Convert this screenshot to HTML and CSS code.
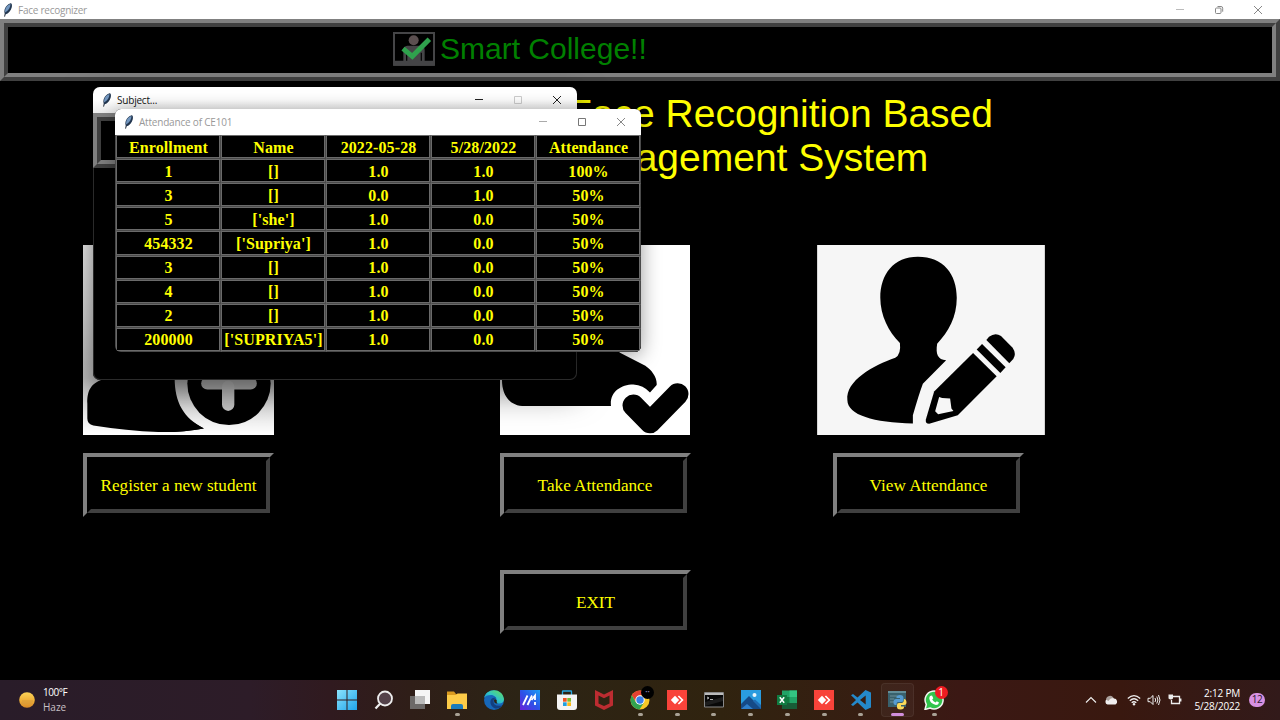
FILE: index.html
```html
<!DOCTYPE html>
<html lang="en">
<head>
<meta charset="utf-8">
<title>Face recognizer</title>
<link rel="stylesheet" href="styles.css">
</head>
<body>
<svg class="defs" aria-hidden="true">
  <defs>
    <symbol id="feather" viewBox="0 0 10 14">
      <path d="M1.600 13.600C1.900 11.600 2.300 10.200 3.100 8.700" fill="none" stroke="#222c3a" stroke-width="1"/>
      <path d="M2.200 11.500C0 7.500 2.500 2.200 7 .4C9 0 9.300 2.200 8.700 4.600C7.900 8 5.800 10.500 2.200 11.500Z" fill="#22364f"/>
      <path d="M2.200 9.500C1.500 5.500 4 2 7.500 1C7.500 4.500 5.600 7.600 2.200 9.500Z" fill="#7296bf"/>
    </symbol>
    <linearGradient id="win" x2="1" y2="1"><stop stop-color="#8be3fc"/><stop offset="1" stop-color="#1fa4ea"/></linearGradient>
    <linearGradient id="edgeA" x1="1" x2="0" y2="1"><stop stop-color="#6be04a"/><stop offset=".5" stop-color="#2fc3c9"/><stop offset="1" stop-color="#1278cf"/></linearGradient>
    <linearGradient id="my" x1="0" y1="1" x2="1" y2="0"><stop stop-color="#6a1fd8"/><stop offset=".5" stop-color="#2c52e8"/><stop offset="1" stop-color="#18a0f5"/></linearGradient>
    <linearGradient id="sun" x2="0" y2="1"><stop stop-color="#fcd458"/><stop offset=".5" stop-color="#f0b23a"/><stop offset="1" stop-color="#d88a28"/></linearGradient>
    <linearGradient id="shade" gradientUnits="userSpaceOnUse" x1="0" y1="-255" x2="0" y2="316"><stop stop-color="#f4f4f4"/><stop offset=".4" stop-color="#dadada"/><stop offset=".7" stop-color="#c2c2c2"/><stop offset=".86" stop-color="#e4e4e4"/><stop offset="1" stop-color="#fff"/></linearGradient>
    <symbol id="anydesk" viewBox="0 0 20 20">
      <path d="M0 0H20V20H0Z" fill="#f8433a"/><path d="M8 5.800L12.200 10L8 14.200L3.800 10Z" fill="#fff"/>
      <path d="M11.400 6L15.400 10L11.400 14" fill="none" stroke="#fff" stroke-width="1.700"/>
    </symbol>
  </defs>
</svg>

<div class="desktop">
  <main class="main-window">
    <div class="titlebar main-title">
      <svg class="feather"><use href="#feather"/></svg>
      <span class="title-text">Face recognizer</span>
      <div class="controls main-controls">
        <svg viewBox="0 0 10 10"><path d="M1 4.500H9" stroke="#bbb"/></svg>
        <svg viewBox="0 0 10 10"><rect x="1.500" y="3" width="5.500" height="5.500" rx="1"/><path d="M3.500 1.500H7Q8.700 1.500 8.700 3.200V6.700"/></svg>
        <svg viewBox="0 0 10 10"><path d="M1 1L9 9M9 1L1 9"/></svg>
      </div>
    </div>

    <header class="ridge"><div class="ridge-inner brand">
      <svg class="logo" viewBox="39 36 126 102">
        <path d="M42 39H162V134H42Z" fill="none" stroke="#454547" stroke-width="6"/>
        <path d="M40 122H70V90Q70 78 82 77H122Q134 78 134 90V122H164V137H40Z" fill="#454547"/>
        <path d="M80 98V122M124 98V122" stroke="#080808" stroke-width="4"/>
        <circle cx="101" cy="61" r="15" fill="#5b4f50"/>
        <path d="M69 86L97 109L148 58" fill="none" stroke="#2fa24d" stroke-width="15"/>
      </svg>
      <span>Smart College!!</span>
    </div></header>

    <h1 class="welcome">Welcome to the Face Recognition Based<br>Attendance Management System</h1>

    <section class="actions">
      <div class="action">
        <svg class="photo" viewBox="9 -255 573 571">
          <path d="M9-255H582V316H9Z" fill="url(#shade)"/>
          <path d="M80 145C30 155 21 185 22 220V265Q22 282 40 286Q140 302 235 306Q310 307 372 295L340 100Z"/>
          <path d="M372 295C310 265 283 215 284 140L300 60H582V316H300Z" fill="url(#shade)"/>
          <path d="M235 306Q310 307 372 295L300 255Z"/>
          <circle cx="447" cy="160" r="125"/>
          <path d="M382 160H512" stroke="#bdbdbd" stroke-width="37" stroke-linecap="round"/>
          <path d="M444.500 170V224" stroke="#c8c8c8" stroke-width="37" stroke-linecap="round"/>
        </svg>
        <button class="tk-button"><span>Register a new student</span></button>
      </div>
      <div class="action">
        <svg class="photo" viewBox="30 -255 570 571">
          <path d="M30-255H600V316H30Z" fill="#fff"/>
          <path d="M36 150C36 195 58 228 105 228H363C358 188 390 163 430 163Q460 165 480 187L500 165C502 142 485 120 466 107L390 68L340 20H90L36 100Z"/>
          <path d="M430 226L480 277L563 192" fill="none" stroke="#000" stroke-width="65" stroke-linecap="round" stroke-linejoin="round"/>
        </svg>
        <button class="tk-button"><span>Take Attendance</span></button>
      </div>
      <div class="action wide">
        <svg class="photo" viewBox="20 13 685 573">
          <path d="M20 13H705V586H20Z" fill="#f6f6f6"/>
          <path d="M323 48C400 48 440 100 440 172C440 230 415 275 381 310C376 343 383 357 408 360L338 430Q325 465 308 525V550C190 547 112 525 111 480C105 420 190 375 255 352Q273 343 269 308C235 275 210 225 210 172C210 100 250 48 323 48Z"/>
          <path d="M489 338L560 408L443 525L357 551Q345 551 347 538L372 454Z"/>
          <path d="M387 470L396 473L420 475L424 505L430 512L384 522L375 513Z" fill="#f6f6f6"/>
          <path d="M516 311L587 381L571 398L500 327Z"/>
          <path d="M529 299L537 289Q556 275 573 287L608 322Q620 340 610 356L598 369Z"/>
        </svg>
        <button class="tk-button"><span>View Attendance</span></button>
      </div>
    </section>
    <div class="exit-row"><button class="tk-button"><span>EXIT</span></button></div>
  </main>

  <footer class="taskbar">
    <div class="weather">
      <svg viewBox="0 0 16 16"><circle cx="8" cy="8" r="7.800" fill="url(#sun)"/><path d="M3 9H14M2 11H13" stroke="#d69a3c"/></svg>
      <div><div class="degrees">100°F</div><div class="dim">Haze</div></div>
    </div>
    <nav class="apps">
      <span class="app"><svg viewBox="0 0 20 20"><path d="M0 0H9.500V9.500H0ZM10.500 0H20V9.500H10.500ZM0 10.500H9.500V20H0ZM10.500 10.500H20V20H10.500Z" fill="url(#win)"/></svg></span>
      <span class="app"><svg viewBox="0 0 20 20"><circle cx="11" cy="8.500" r="7" fill="#54424a" stroke="#eee" stroke-width="1.800"/><path d="M6.300 13.500L1.500 18.500" stroke="#eee" stroke-width="2.200"/></svg></span>
      <span class="app"><svg viewBox="0 0 20 20"><path d="M5 0H20V14H5Z" fill="#f5f5f5"/><path d="M0 6H15V19H0Z" fill="#777" opacity=".85"/><path d="M5 6H15V14H5Z" fill="#bbb"/></svg></span>
      <span class="app running"><svg viewBox="0 0 20 20"><path d="M0 1.500H7L9 4H18V10H0Z" fill="#d99a20"/><path d="M0 5H9L10.500 3.500H20V19H0Z" fill="#fccb48"/><path d="M4 19V16Q4 14 6 14H14Q16 14 16 16V19Z" fill="#1c7bbb"/></svg></span>
      <span class="app"><svg viewBox="0 0 20 20"><circle cx="10" cy="10" r="10" fill="#1767b8"/><path d="M0 8C2-2 18-3 20 9C20 14 14 14.500 12 12.500C14 9 11 5 7 5Q2 5 0 8Z" fill="url(#edgeA)"/><path d="M12.500 8C6 6 4 14 10 18Q15 20 18 15.500Q9 17 9.500 11Q10 8 12.500 8Z" fill="#123f80"/><path d="M10 10Q11 8.500 12.800 10.500Q12 12 13.500 13.500Q10 14 10 10Z" fill="#2c2415"/></svg></span>
      <span class="app"><svg viewBox="0 0 20 20"><path d="M0 0H20V20H0Z" fill="url(#my)"/><path d="M3 15L7.500 5.500M7.500 15L12 5.500" stroke="#fff" stroke-width="1.800"/><path d="M11.500 10L15 5.500V10M15 12V15" fill="none" stroke="#fff" stroke-width="1.800"/></svg></span>
      <span class="app"><svg viewBox="0 0 20 20"><path d="M5.500 6V1.500Q5.500 1 6 1H14Q14.500 1 14.500 1.500V6" fill="none" stroke="#28a8e0" stroke-width="1.300"/><path d="M0 4.500H20V17Q20 20 17 20H3Q0 20 0 17Z" fill="#f4f4f4"/><path d="M6 8H9.700V11.700H6Z" fill="#f05323"/><path d="M10.300 8H14V11.700H10.300Z" fill="#7cba2d"/><path d="M6 12.300H9.700V16H6Z" fill="#1e9fe0"/><path d="M10.300 12.300H14V16H10.300Z" fill="#fbb813"/></svg></span>
      <span class="app"><svg viewBox="0 0 20 20"><path d="M1 0L10 4.500L19 0V15.500L10 20L1 15.500ZM4.500 5.500V13.500L10 16L15.500 13.500V5.500L10 8.200Z" fill="#bd2c31" fill-rule="evenodd"/></svg></span>
      <span class="app running"><svg viewBox="0 0 20 20"><circle cx="10" cy="10" r="9.500" fill="#f8c826"/><path d="M1.800 5.200A9.500 9.500 0 0 1 18.200 5.200H10L6 12Z" fill="#e34133"/><path d="M1.800 5.200A9.500 9.500 0 0 0 9.500 19.500L14 12.500L6 12.500Z" fill="#32a350"/><circle cx="10" cy="10" r="4.700" fill="#fff"/><circle cx="10" cy="10" r="3.700" fill="#3a7fe8"/></svg><i class="badge dark-badge">••</i></span>
      <span class="app running"><svg><use href="#anydesk"/></svg></span>
      <span class="app running"><svg viewBox="0 0 20 20"><path d="M.5 2.500H19.500V17H.5Z" fill="#080808" stroke="#888"/><path d="M1 3H19V5H1Z" fill="#bbb"/><path d="M3 7L5 8L3 9M6 9.500H9" fill="none" stroke="#ddd" stroke-width=".8"/><path d="M1 12L19 7V11L1 16Z" fill="#444" opacity=".35"/></svg></span>
      <span class="app running"><svg viewBox="0 0 20 20"><path d="M0 0H20V19H0Z" fill="#2a9cdf"/><path d="M0 14L8 6L20 18V19H0Z" fill="#154a87"/><path d="M0 19L6 14L12 19Z" fill="#2f7fcc"/><path d="M12 11L14 9.500L20 15V19Z" fill="#1f6cb4"/><circle cx="13.500" cy="5" r="2" fill="#eaf5fa"/></svg></span>
      <span class="app running"><svg viewBox="0 0 20 20"><path d="M5 .5H20V19H5Z" fill="#21a366"/><path d="M5 7H12.500V13H5Z" fill="#107c41"/><path d="M5 13H20V19H5Z" fill="#185c37"/><path d="M12.500.5H20V7H12.500Z" fill="#33c481"/><path d="M0 5H10V15H0Z" fill="#107c41"/><path d="M2.800 7.200L7.200 12.800M7.200 7.200L2.800 12.800" stroke="#fff" stroke-width="1.500"/></svg></span>
      <span class="app running"><svg><use href="#anydesk"/></svg></span>
      <span class="app running"><svg viewBox="0 0 20 20"><path d="M14.500 0L20 2.500V17.500L14.500 20L6.500 12.500L2 16L0 14.800L5 10L0 5.200L2 4L6.500 7.500ZM14.700 5.500L9 10L14.700 14.500Z" fill="#2489ca" fill-rule="evenodd"/></svg></span>
      <span class="app active"><svg viewBox="0 0 20 20"><path d="M1 1H19V17H1Z" fill="#315b68"/><path d="M1 1H19V3H1Z" fill="#5c8a95"/><path d="M3 6H10M3 9H7M3 12H7" stroke="#7397a0" stroke-width=".8"/><path d="M13 5Q16.500 5 16.500 8V10Q16.500 12 14.500 12H11Q9.500 12 9.500 15H8Q6 14 6.500 11Q7 9 9 9H13V8H9.500V7Q9.500 5 13 5Z" fill="#4f98d0"/><path d="M17 9Q19.500 9 19.500 13Q19.500 15 17 15H14V16.500H17Q17.500 19.500 13.500 19.500Q10 19.500 10 17V15Q10 13 12 13H15Q17 12.500 17 9Z" fill="#fbd952"/></svg></span>
      <span class="app running"><svg viewBox="0 0 20 20"><path d="M1 19.500L2.300 14.500A9 9 0 1 1 6 18Z" fill="#31c44c" stroke="#f2f6f1" stroke-width="1.500"/><path d="M6 6L8 5.500L9.300 8.200L8.200 9.500Q9.300 11.500 11.500 12.400L12.800 11.200L15 12.500Q14.500 15 12 15Q6 13.500 5.300 8.500Q5.300 7 6 6Z" fill="#fff"/></svg><i class="badge red-badge">1</i></span>
    </nav>
    <div class="tray">
      <svg viewBox="0 0 12 12" width="12"><path d="M1 8.500L6 3.500L11 8.500" fill="none" stroke="#eee" stroke-width="1.100"/></svg>
      <svg viewBox="0 0 14 12" width="14"><path d="M3.500 10.500A3 3 0 0 1 3 5A4 4 0 0 1 10 4.500A3.200 3.200 0 0 1 11.500 10.500Z" fill="#f0eeee"/><path d="M2 5.500A4 4 0 0 1 9.500 4Q6 4 4.500 7Q3 6 2 5.500Z" fill="#aaa09c"/></svg>
      <svg viewBox="0 0 14 12" width="14" class="wifi"><path d="M.8 4.500Q7-1.300 13.200 4.500M2.800 6.800Q7 2.700 11.200 6.800M4.700 8.800Q7 6.700 9.300 8.800" fill="none" stroke="#eee" stroke-width="1.200"/><circle cx="7" cy="10.300" r="1.200" fill="#eee"/></svg>
      <svg viewBox="0 0 14 12" width="14"><path d="M1 4.300H3.200L6 1.500V10.500L3.200 7.700H1ZM8 4Q9.400 6 8 8M9.800 2.500Q12 6 9.800 9.500M11.500 1Q14.500 6 11.500 11" fill="none" stroke="#eee"/></svg>
      <svg viewBox="0 0 14 12" width="14" class="battery"><path d="M5 2.500H11.500V9.500H3.500V6M12.800 4.500V7.500" fill="none" stroke="#eee" stroke-width="1.300"/><path d="M.5 .5H5V4.500Q3 6.500 .5 4.500Z" fill="#eee"/></svg>
      <div class="clock"><div>2:12 PM</div><div>5/28/2022</div></div>
      <span class="count">12</span>
    </div>
  </footer>

  <section class="window subject">
    <div class="titlebar">
      <svg class="feather"><use href="#feather"/></svg>
      <span class="title-text">Subject...</span>
      <div class="controls">
        <svg viewBox="0 0 10 10"><path d="M1 4.500H9"/></svg>
        <svg viewBox="0 0 10 10"><path d="M1.500 1.500H8.500V8.500H1.500Z" stroke="#ccc"/></svg>
        <svg viewBox="0 0 10 10"><path d="M1 1L9 9M9 1L1 9"/></svg>
      </div>
    </div>
    <div class="ridge subject-ridge"><div class="ridge-inner"></div></div>
  </section>

  <section class="window attendance">
    <div class="titlebar">
      <svg class="feather"><use href="#feather"/></svg>
      <span class="title-text">Attendance of CE101</span>
      <div class="controls">
        <svg viewBox="0 0 10 10"><path d="M1 4.500H9" stroke="#aaa"/></svg>
        <svg viewBox="0 0 10 10"><path d="M1.500 1.500H8.500V8.500H1.500Z" stroke="#777"/></svg>
        <svg viewBox="0 0 10 10"><path d="M1 1L9 9M9 1L1 9"/></svg>
      </div>
    </div>
    <div class="sheet">
      <b>Enrollment</b><b>Name</b><b>2022-05-28</b><b>5/28/2022</b><b>Attendance</b>
      <b>1</b><b>[]</b><b>1.0</b><b>1.0</b><b>100%</b>
      <b>3</b><b>[]</b><b>0.0</b><b>1.0</b><b>50%</b>
      <b>5</b><b>['she']</b><b>1.0</b><b>0.0</b><b>50%</b>
      <b>454332</b><b>['Supriya']</b><b>1.0</b><b>0.0</b><b>50%</b>
      <b>3</b><b>[]</b><b>1.0</b><b>0.0</b><b>50%</b>
      <b>4</b><b>[]</b><b>1.0</b><b>0.0</b><b>50%</b>
      <b>2</b><b>[]</b><b>1.0</b><b>0.0</b><b>50%</b>
      <b>200000</b><b>['SUPRIYA5']</b><b>1.0</b><b>0.0</b><b>50%</b>
    </div>
  </section>
</div>
</body>
</html>
```
FILE: styles.css
```css
* { box-sizing: border-box; }
body { margin: 0; background: #000; }
.defs { position: absolute; width: 0; height: 0; }
.desktop {
  position: relative;
  width: 1280px;
  height: 720px;
  overflow: hidden;
  display: grid;
  grid-template-rows: 680px 40px;
}
.main-window { background: #000; overflow: hidden; }

.titlebar {
  display: flex;
  align-items: center;
  height: 26px;
  padding-left: 8px;
  background: #fff;
  font: 10px "Open Sans", "Noto Sans", sans-serif;
  color: #999;
}
.main-title { height: 19px; padding-left: 3px; }
.feather { width: 10px; height: 14px; flex: none; margin-right: 5px; }
.window .feather { margin-left: 1px; margin-top: -1px; }
.title-text { letter-spacing: -0.2px; white-space: nowrap; }
.main-title .title-text { letter-spacing: -0.25px; }
.controls { margin-left: auto; display: flex; gap: 29px; padding-right: 15px; }
.controls svg { width: 10px; height: 10px; fill: none; stroke: #888; stroke-width: 1; }
.main-controls { padding-right: 17px; }

.ridge { border: 4px solid; border-color: #808080 #404040 #404040 #808080; }
.ridge-inner { border: 4px solid; border-color: #404040 #808080 #808080 #404040; background: #000; height: 100%; }
.main-window .ridge { height: 62px; }
.brand {
  display: flex;
  align-items: center;
  gap: 5px;
  padding-left: 385px;
  padding-bottom: 2px;
  font: 30px "Liberation Sans", Arial, sans-serif;
  color: #008000;
}
.logo { width: 42px; height: 34px; flex: none; }

.welcome {
  margin: 0;
  padding-top: 11px;
  height: 163.5px;
  text-align: center;
  font: 39px/44px "Liberation Sans", Arial, sans-serif;
  color: #ff0;
}

.actions { display: flex; align-items: flex-start; padding-left: 83px; }
.action { display: flex; flex-direction: column; align-items: center; gap: 18px; width: 191px; margin-right: 226px; }
.action:nth-child(2) { width: 190px; }
.action.wide { width: 228px; margin-left: -99px; margin-right: 0; }
.action.wide .tk-button { margin-left: -5px; }
.photo { display: block; width: 100%; height: 190.5px; }
.tk-button {
  width: 191px;
  height: 64px;
  padding: 0;
  background: #000;
  border: 4px solid;
  border-color: #808080 #000 #000 #808080;
  font: 17.2px "Liberation Serif", "Times New Roman", serif;
  color: #ff0;
}
.tk-button span {
  display: grid;
  place-items: center;
  height: 100%;
  padding-top: 2px;
  border: 4px solid;
  border-color: #000 #404040 #404040 #000;
}
.exit-row { padding: 53px 0 0 500px; }

.window { position: absolute; border-radius: 7px; overflow: hidden; background: #000; }
.subject {
  left: 93px;
  top: 87px;
  width: 484px;
  height: 293px;
  box-shadow: inset 0 0 0 1px #2b2b2b, 0 12px 32px rgba(0, 0, 0, .55);
}
.subject .titlebar { color: #111; background: linear-gradient(#fff 50%, #ececec); }
.subject .controls svg { stroke: #222; }
.subject-ridge { height: 55px; }
.attendance {
  left: 115px;
  top: 109px;
  width: 526px;
  height: 243px;
  border-radius: 6px;
  box-shadow: 0 3px 20px rgba(0, 0, 0, .4);
}
.sheet {
  display: grid;
  grid-template-columns: repeat(5, 1fr);
  grid-template-rows: repeat(9, 1fr);
  height: 217px;
  border-left: 1px solid #4a4a4a;
}
.sheet b {
  display: grid;
  place-items: center;
  padding-top: 1px;
  border: 1px solid;
  border-color: #6a6a6a #4a4a4a #4a4a4a #6a6a6a;
  box-shadow: inset -1px -1px #6a6a6a;
  background: #000;
  font: bold 16px/20px "Liberation Serif", "Times New Roman", serif;
  letter-spacing: 0.1px;
  color: #ff0;
  white-space: nowrap;
}

.taskbar {
  display: flex;
  align-items: center;
  background: linear-gradient(90deg, #291c29 0, #2d1c28 250px, #301a1f 330px, #2f1e18 410px, #2c2415 520px, #30230f 720px, #371d12 880px, #3b1814 960px, #39180f 1120px, #321a1a 1280px);
  font: 10px/13.5px "Open Sans", "Noto Sans", sans-serif;
  color: #fff;
}
.weather { display: flex; align-items: center; gap: 8px; width: 328.600px; padding-left: 19px; }
.weather svg { width: 16px; height: 16px; }
.degrees { letter-spacing: -0.5px; }
.dim { color: #c8c0c6; padding-top: 1px; }
.apps { display: grid; grid-template-columns: repeat(17, 36.700px); height: 40px; }
.app { position: relative; display: grid; place-items: center; }
.app svg { width: 20px; height: 20px; }
.running::after, .active::after {
  content: "";
  position: absolute;
  bottom: 4px;
  left: 16px;
  width: 5px;
  height: 3px;
  border-radius: 2px;
  background: #a9a296;
}
.active::before {
  content: "";
  position: absolute;
  inset: 3px 2px;
  border: 1px solid rgba(255, 255, 255, .06);
  border-radius: 4px;
  background: rgba(255, 255, 255, .04);
}
.active::after { left: 12px; width: 13px; background: #d18fdc; }
.badge {
  position: absolute;
  left: 19px;
  top: 6px;
  width: 13px;
  height: 13px;
  border-radius: 50%;
  text-align: center;
  font: 10px/13px "Open Sans", sans-serif;
}
.dark-badge { background: #000; font-size: 6px; color: #8888b8; }
.red-badge { background: #ee1c22; }
.tray { display: flex; align-items: center; margin-left: auto; padding-right: 15px; }
.tray svg { height: 12px; margin-right: 7px; }
.tray .wifi { margin: 0 6px 0 2px; }
.tray .battery { margin-right: 0; }
.clock { width: 58px; text-align: right; letter-spacing: -0.2px; }
.count {
  width: 16px;
  height: 14px;
  margin-left: 9px;
  border-radius: 7px;
  background: #d891e2;
  color: #2b1830;
  text-align: center;
  letter-spacing: -0.5px;
}
```
